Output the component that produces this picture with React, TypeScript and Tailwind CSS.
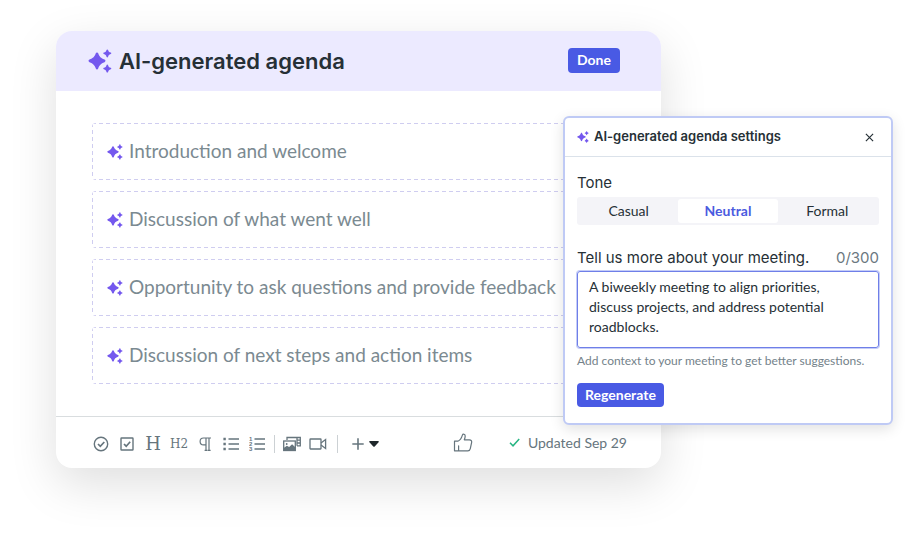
import { ReactNode, useState } from "react";

const agenda = [
  "Introduction and welcome",
  "Discussion of what went well",
  "Opportunity to ask questions and provide feedback",
  "Discussion of next steps and action items",
];

const tones = ["Casual", "Neutral", "Formal"];

function Sparkles({ className }: { className: string }) {
  return (
    <svg viewBox="0 0 24 24" fill="#7458ee" className={className} aria-hidden="true">
      <path d="M9 3.400c.6 0 1 .3 1.200.9 1.200 3.400 2.600 4.900 6.300 6.300 1.300.5 1.300 2.100 0 2.600-3.700 1.400-5.100 2.900-6.300 6.300-.4 1.200-2 1.200-2.400 0-1.200-3.400-2.600-4.900-6.300-6.300-1.300-.5-1.300-2.100 0-2.600C5.200 9.200 6.600 7.700 7.800 4.300c.2-.6.6-.9 1.200-.9Z" />
      <path d="M19.300.4c.4 0 .6.200.8.600.4 1.500 1 2.100 2.600 2.600.8.300.8 1.200 0 1.500-1.600.5-2.200 1.100-2.600 2.600-.3.900-1.300.9-1.600 0-.4-1.500-1-2.100-2.600-2.600-.8-.3-.8-1.200 0-1.500 1.600-.5 2.200-1.100 2.600-2.600.2-.4.400-.6.800-.6Z" />
      <path d="M19.300 15.600c.4 0 .6.200.8.600.4 1.500 1 2.100 2.600 2.600.8.300.8 1.200 0 1.500-1.600.5-2.200 1.100-2.600 2.600-.3.900-1.300.9-1.600 0-.4-1.500-1-2.100-2.600-2.600-.8-.3-.8-1.200 0-1.500 1.600-.5 2.200-1.100 2.600-2.600.2-.4.400-.6.800-.6Z" />
    </svg>
  );
}

function Icon({ children, className = "size-4" }: { children: ReactNode; className?: string }) {
  return (
    <svg
      viewBox="0 0 16 16"
      fill="none"
      stroke="currentColor"
      strokeWidth="1.4"
      className={className}
      aria-hidden="true"
    >
      {children}
    </svg>
  );
}

function Tool({ label, children }: { label: string; children: ReactNode }) {
  return (
    <button type="button" aria-label={label} className="flex h-5 w-[18px] items-center justify-center">
      {children}
    </button>
  );
}

function Toolbar() {
  return (
    <div className="flex items-center gap-2 pt-[2px]">
      <Tool label="Decision">
        <Icon>
          <circle cx="8" cy="8" r="6.700" />
          <path d="m5 8 2.300 2.300 4-4.300" strokeWidth="1.700" />
        </Icon>
      </Tool>
      <Tool label="Task">
        <Icon>
          <rect x="2" y="2" width="12" height="12" rx=".5" />
          <path d="m5 8 2.200 2.200 4-4.400" strokeWidth="1.700" />
        </Icon>
      </Tool>
      <Tool label="Heading 1">
        <span className="font-[DejaVu_Serif,serif] text-lg leading-5">H</span>
      </Tool>
      <Tool label="Heading 2">
        <span className="font-[DejaVu_Serif,serif] text-xs leading-5">H2</span>
      </Tool>
      <Tool label="Paragraph">
        <Icon>
          <path d="M14 2H6.500a3.300 3.300 0 0 0 0 6.800H9M9 2v12.300M12 2v12.300M7.600 14.300h2.800M10.800 14.300h2.800" strokeWidth="1.200" />
        </Icon>
      </Tool>
      <Tool label="Bulleted list">
        <Icon>
          <path d="M5.500 3H16M5.500 8H16M5.500 13H16" />
          <path d="M.4 3h2.400M.4 8h2.400M.4 13h2.400" strokeWidth="2.400" />
        </Icon>
      </Tool>
      <Tool label="Numbered list">
        <Icon>
          <path d="M5.500 3H16M5.500 8H16M5.500 13H16" />
          <g fill="currentColor" stroke="none" fontSize="6" fontWeight="700" fontFamily="Liberation Sans, sans-serif">
            <text x="0" y="5">1</text>
            <text x="0" y="10">2</text>
            <text x="0" y="15">3</text>
          </g>
        </Icon>
      </Tool>
      <span className="h-[18px] w-px bg-[#ccd1d4]" />
      <Tool label="Insert image">
        <svg viewBox="0 0 18 16" fill="none" stroke="currentColor" strokeWidth="1.300" className="h-4 w-[18px] shrink-0" aria-hidden="true">
          <path d="M4 4V1.500h13.300v8.300H14M14 1.500v8.300M14 4.200h3M14 7h3" />
          <rect x=".7" y="5" width="11.600" height="9.500" />
          <path d="m.7 12 3.200-2.300 2.200 1.200 3-2.600 3.200 3v3.200H.7Z" fill="currentColor" stroke="none" />
          <circle cx="3.700" cy="8" r=".9" fill="currentColor" stroke="none" />
        </svg>
      </Tool>
      <Tool label="Insert video">
        <svg viewBox="0 0 18 16" fill="none" stroke="currentColor" strokeWidth="1.300" className="h-4 w-[18px] shrink-0" aria-hidden="true">
          <rect x="1" y="3" width="11" height="10" rx=".5" />
          <path d="m12 7 4.600-3.500v9L12 9" />
        </svg>
      </Tool>
      <span className="ml-[2px] h-[18px] w-px bg-[#ccd1d4]" />
      <button type="button" aria-label="Insert more" className="ml-[5px] flex items-center gap-1">
        <Icon className="size-[14px]">
          <path d="M8 1.500v13M1.500 8h13" strokeWidth="1.800" />
        </Icon>
        <svg viewBox="0 0 10 6" className="h-[6px] w-[10px]" aria-hidden="true">
          <path d="M1 0h8c.8 0 1.100.7.6 1.200L5.700 5.400a1 1 0 0 1-1.400 0L.4 1.200C-.1.700.2 0 1 0Z" fill="#1f272b" />
        </svg>
      </button>
    </div>
  );
}

function SettingsPanel() {
  const [tone, setTone] = useState("Neutral");
  const [context, setContext] = useState(
    "A biweekly meeting to align priorities, discuss projects, and address potential roadblocks."
  );

  return (
    <section className="absolute top-[85px] right-0 w-[330px] rounded-md border-2 border-[#bfcaf5] bg-white shadow-[0_4px_14px_rgba(0,0,0,0.12)]">
      <header className="flex h-[39px] items-center gap-[5px] border-b border-[#dbe2ea] px-3">
        <Sparkles className="size-3" />
        <h2 className="flex-1 font-['Inter',sans-serif] text-[13px] font-semibold">AI-generated agenda settings</h2>
        <button type="button" aria-label="Close" className="mr-[5px]">
          <svg viewBox="0 0 10 10" className="size-[9px]" stroke="currentColor" strokeWidth="1.300" aria-hidden="true">
            <path d="m1 1 8 8M9 1 1 9" />
          </svg>
        </button>
      </header>

      <form className="px-3 py-4" onSubmit={(e) => e.preventDefault()}>
        <fieldset>
          <legend className="font-['Inter',sans-serif] text-[15px] leading-5">Tone</legend>
          <div className="mt-1 grid h-7 grid-cols-3 rounded-[3px] bg-[#f4f4f8] p-[2px]">
            {tones.map((t) => (
              <label
                key={t}
                className="flex items-center justify-center rounded-[3px] text-sm has-checked:bg-white has-checked:font-bold has-checked:text-[#4b5be0]"
              >
                <input
                  type="radio"
                  name="tone"
                  value={t}
                  checked={tone === t}
                  onChange={() => setTone(t)}
                  className="sr-only"
                />
                {t}
              </label>
            ))}
          </div>
        </fieldset>

        <div className="mt-[23px] flex justify-between font-['Inter',sans-serif] text-[15px] leading-5">
          <label htmlFor="context">Tell us more about your meeting.</label>
          <span className="text-[#6b787f]">0/300</span>
        </div>
        <textarea
          id="context"
          rows={3}
          value={context}
          onChange={(e) => setContext(e.target.value)}
          className="mt-[3px] block h-[77px] w-full resize-none overflow-hidden rounded-[3px] border border-[#6f7fe8] py-[5px] pr-8 pl-[11px] text-sm leading-5 shadow-[0_0_0_1px_#c5cdf7] outline-none"
        />
        <p className="mt-1 text-xs leading-[18px] text-[#74828a]">
          Add context to your meeting to get better suggestions.
        </p>
        <button type="submit" className="mt-[13px] h-6 rounded bg-[#495ae4] px-2 text-sm font-bold text-white">
          Regenerate
        </button>
      </form>
    </section>
  );
}

export default function App() {
  return (
    <main className="min-h-screen bg-white pt-[31px] pr-5 pb-20 pl-14 font-['Lato',sans-serif] text-[#263036]">
      <div className="relative">
        <article className="mr-[232px] rounded-2xl bg-white shadow-[0_16px_48px_rgba(0,0,0,0.13)]">
          <header className="flex h-[60px] items-center justify-between rounded-t-2xl bg-[#eceaff] pr-[41px] pl-8">
            <div className="flex items-center gap-[7px]">
              <Sparkles className="size-6" />
              <h1 className="font-['Inter',sans-serif] text-[22px] leading-7 font-semibold">AI-generated agenda</h1>
            </div>
            <button type="button" className="mb-[2px] h-[25px] rounded bg-[#495ae4] px-[9px] text-sm font-bold text-white">
              Done
            </button>
          </header>

          <ul className="flex flex-col gap-[11px] px-9 py-8">
            {agenda.map((item) => (
              <li
                key={item}
                className="flex h-[57px] items-center gap-[6px] rounded-sm bg-[image:repeating-linear-gradient(90deg,#cfcdf0_0_4px,transparent_4px_7px),repeating-linear-gradient(90deg,#cfcdf0_0_4px,transparent_4px_7px),repeating-linear-gradient(#cfcdf0_0_4px,transparent_4px_7px),repeating-linear-gradient(#cfcdf0_0_4px,transparent_4px_7px)] bg-[length:100%_1px,100%_1px,1px_100%,1px_100%] bg-[position:0_0,0_100%,0_0,100%_0] bg-no-repeat pl-[15px] text-[19px] whitespace-nowrap text-[#7b8a91]"
              >
                <Sparkles className="size-4 shrink-0" />
                {item}
              </li>
            ))}
          </ul>

          <footer className="flex h-[52px] items-center justify-between border-t border-[#d9dddf] pr-[34px] pl-9 text-[#66757d]">
            <Toolbar />
            <div className="flex items-center gap-9">
              <button type="button" aria-label="Like">
                <svg viewBox="0 0 20 20" fill="none" stroke="currentColor" strokeWidth="1.200" strokeLinejoin="round" strokeLinecap="round" className="size-5" aria-hidden="true">
                  <path d="M1.500 8.200h3.300c2.500-1 3.800-3.400 4.600-6.100.5-1.500 2.900-1 2.800 1-.1 1.400-.5 2.700-.9 3.700h5.100c1.800 0 2.600 1.200 2.200 2.800l-1.300 6c-.3 1.500-1.100 2.200-2.400 2.200H1.500ZM5.600 17.500v-4.700" />
                </svg>
              </button>
              <p className="flex items-center gap-2 text-sm">
                <svg viewBox="0 0 11 9" fill="none" stroke="#27b583" strokeWidth="1.500" className="h-[9px] w-[11px]" aria-hidden="true">
                  <path d="m1 4.800 3 3L10.200 1" />
                </svg>
                Updated Sep 29
              </p>
            </div>
          </footer>
        </article>
        <SettingsPanel />
      </div>
    </main>
  );
}
